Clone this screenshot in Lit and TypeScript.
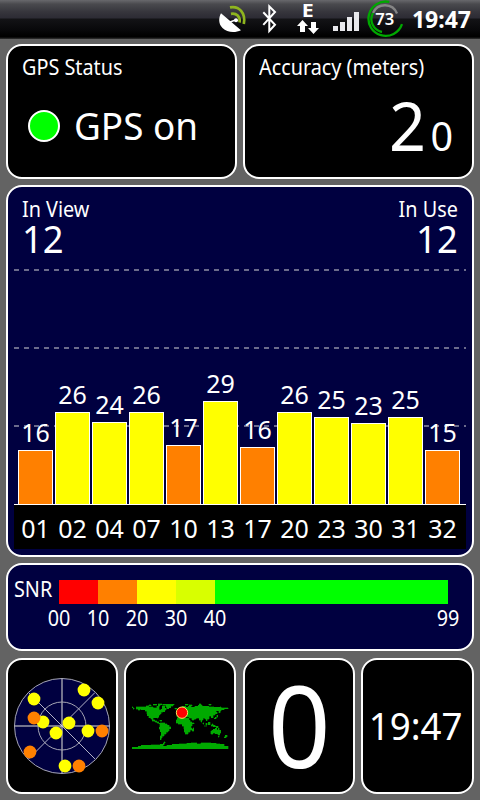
import { LitElement, html, svg, css } from "lit";
import { customElement } from "lit/decorators.js";
import { styleMap } from "lit/directives/style-map.js";

const ORANGE = "#ff8000";
const YELLOW = "#ffff00";

interface Satellite {
  id: string;
  snr: number;
  height: number;
}

const SATELLITES: Satellite[] = [
  { id: "01", snr: 16, height: 54 },
  { id: "02", snr: 26, height: 92 },
  { id: "04", snr: 24, height: 82 },
  { id: "07", snr: 26, height: 92 },
  { id: "10", snr: 17, height: 59 },
  { id: "13", snr: 29, height: 103 },
  { id: "17", snr: 16, height: 57 },
  { id: "20", snr: 26, height: 92 },
  { id: "23", snr: 25, height: 87 },
  { id: "30", snr: 23, height: 81 },
  { id: "31", snr: 25, height: 87 },
  { id: "32", snr: 15, height: 54 },
];

const SKY: Array<[number, number, string]> = [
  [20, 21, YELLOW],
  [70, 12, YELLOW],
  [84, 25, YELLOW],
  [29, 44, YELLOW],
  [20, 40, ORANGE],
  [55, 45, YELLOW],
  [42, 55, YELLOW],
  [74, 53, YELLOW],
  [88, 53, ORANGE],
  [16, 74, ORANGE],
  [51, 88, YELLOW],
  [65, 88, ORANGE],
];

const LAND = [
  // Alaska, Canada, United States, Mexico
  "M408 171H438V168H446V171H460V174H470V170H478V180H484V178H494V186H490V188H484V192H480V196H476V202H474V206H470V204H460V210H464V213H470V216H476V220H482V222H476V220H470V217H464V214H456V209H452V204H446V198H442V192H440V184H436V180H424V178H420V181H414V178H408Z",
  // Arctic islands and Greenland
  "M460 164H470V167H460ZM474 162H486V165H480V169H474ZM486 168H494V176H498V181H492V177H486ZM446 165H454V168H446ZM488 163H522V166H518V170H512V174H506V177H500V172H497V167H488Z",
  // South America
  "M480 219H494V222H501V227H507V231H512V237H508V243H504V248H498V253H492V260H487V266H484V270H481V258H484V246H480V239H477V232H479Z",
  // Europe and Asia
  "M534 179H540V174H547V170H557V173H564V170H573V173H584V169H594V166H606V169H626V171H642V173H660V171H664V174H684V177H672V180H664V184H660V189H656V183H648V187H652V192H645V196H639V204H633V200H628V208H622V213H619V208H614V205H609V211H605V217H602V212H597V205H588V209H582V212H575V206H567V202H559V199H551V196H544V199H536V202H530V195H534V191H528V187H535V184H529Z",
  // Africa
  "M531 204H546V202H550V206H566V210H570V216H575V219H582V222H577V228H573V236H575V242H570V248H564V253H556V248H553V238H551V229H546V224H534V221H529V210H531ZM578 234H581V244H577Z",
  // Indonesia, Australia, New Zealand
  "M608 219H611V223H608ZM617 221H622V226H617ZM624 218H631V225H625ZM633 225H636V222H639V226H646V229H655V234H648V231H639V229H633ZM613 228H622V230H613ZM635 241H640V238H646V236H650V240H654V236H657V242H662V250H659V257H653V252H645V251H638V253H632V244H635ZM655 259H658V262H655ZM676 257H681V261H678V264H673V261H676ZM643 205H646V202H650V197H653V203H648V207H643Z",
  "M396 171H400V174H396ZM399 175H403V178H399ZM524 176H531V179H524ZM568 165H577V168H568ZM598 162H603V165H598ZM556 164H564V167H556ZM626 164H634V167H626ZM479 211H485V214H479Z",
  // Antarctica
  "M396 293H414V290H424V286H440V287H452V285H480V283H490V279H493V276H496V280H492V286H488V289H500V286H516V284H536V282H560V281H572V279H590V282H602V279H632V280H648V282H660V284H672V290H684V297H396Z",
].join("");

@customElement("status-bar")
class StatusBar extends LitElement {
  static styles = css`
    :host {
      display: flex;
      height: 39px;
      box-sizing: border-box;
      justify-content: flex-end;
      padding-right: 9px;
      background: linear-gradient(#68686c 0, #4a4a4e 4px, #36353c 12px, #2c2b34 18px, #131316 19px, #08080a 30px, #000 36px, #000 37px, #333 39px);
      color: #fff;
      font-family: "Noto Sans", sans-serif;
      font-weight: 700;
    }
    svg {
      display: block;
      flex: none;
      overflow: visible;
    }
    .clock {
      width: 61px;
      margin-left: 6px;
      font-size: 23px;
      line-height: 38px;
      text-align: right;
      white-space: nowrap;
    }
    .small {
      font-size: 16.5px;
      font-weight: 600;
    }
    .edge {
      font-size: 17px;
    }
  `;

  render() {
    return html`
      <svg width="150" height="38" viewBox="216 0 150 38">
        <path d="M221 13.3 241 30.3C235 33.2 227 32.7 222.5 28C218.5 24 218.4 18 221 13.3Z" fill="#fff" />
        <path d="M230 22 235.5 20" stroke="#fff" stroke-width="1.6" />
        <circle cx="236" cy="20.2" r="2" fill="#fff" />
        <path d="M231 13.8C236.5 12.8 240.5 16.5 239.6 22.5M230 7.4C239 5.6 246 13 243.8 24" fill="none" stroke="#8fb51f" stroke-width="2.7" />
        <path d="M263.3 12.3 275 24.7 269.3 31V6.3L275 12 263.3 24.8" fill="none" stroke="#fff" stroke-width="2" />
        <text class="edge" x="301.8" y="16.7" textLength="12" lengthAdjust="spacingAndGlyphs" fill="#fff">E</text>
        <path d="M302.5 20 308 26H305V32H300V26H297ZM311 22H316V28H319L313.5 34 308 28H311Z" fill="#fff" />
        <path d="M333 26H338V31H333ZM340 22H345V31H340ZM347 17H352V31H347ZM354 12H359V31H354Z" fill="#e8e8ec" />
      </svg>
      <svg width="38" height="38" viewBox="365 0 38 38">
        <g fill="none" stroke-width="2.3">
          <path d="M388.3 1.9A17.2 17.2 0 1 0 401 24.2" stroke="#00a800" />
          <path d="M372 13A13 13 0 0 1 396 13.5" stroke="#858585" />
          <path d="M372 13A13 13 0 0 0 381 32" stroke="#00a800" />
        </g>
        <text class="small" x="383.8" y="25" text-anchor="middle" textLength="19" lengthAdjust="spacingAndGlyphs" fill="#fff">73</text>
      </svg>
      <div class="clock">19:47</div>
    `;
  }
}

@customElement("app-root")
class AppRoot extends LitElement {
  static styles = css`
    :host {
      display: block;
      width: 480px;
      height: 800px;
      overflow: hidden;
      background: #636363;
      color: #fff;
      font-family: "Noto Sans", sans-serif;
      white-space: nowrap;
    }
    .dash {
      display: grid;
      grid-template-rows: 135px 372px 88px 136px;
      row-gap: 6px;
      padding: 5px 6px 0;
    }
    .row {
      display: grid;
      column-gap: 6px;
    }
    .top {
      grid-template-columns: 231px 231px;
      grid-template-rows: 135px;
    }
    .bottom {
      grid-template-columns: 112px 113px 112px 113px;
      grid-template-rows: 136px;
      margin-top: 1px;
    }
    .map {
      margin-right: 1px;
    }
    .card {
      box-sizing: border-box;
      border: 2px solid #fff;
      border-radius: 16px;
      background: #000;
      min-width: 0;
    }
    .navy {
      background: #000040;
    }
    .label {
      display: block;
      font-size: 22px;
      line-height: 22px;
      transform: scaleX(0.9);
      transform-origin: left;
    }
    .end {
      transform-origin: right;
    }
    .pad {
      padding: 9px 14px 0;
    }
    .gps {
      display: flex;
      align-items: center;
      gap: 14px;
      padding: 21px 0 0 6px;
      font-size: 38px;
      line-height: 58px;
    }
    .state {
      margin-top: -2px;
      transform: scaleX(0.97);
      transform-origin: left;
    }
    .dot {
      box-sizing: border-box;
      width: 32px;
      height: 32px;
      border: 2px solid #fff;
      border-radius: 50%;
      background: #0f0;
    }
    .accuracy {
      display: flex;
      justify-content: flex-end;
      align-items: baseline;
      padding: 8px 5px 0 0;
      line-height: 80px;
    }
    .whole {
      font-size: 68px;
      transform: scaleX(0.95);
      transform-origin: right;
    }
    .frac {
      font-size: 39.5px;
      margin-left: 4px;
    }
    .chart {
      padding: 0 6px;
    }
    .heads {
      display: flex;
      justify-content: space-between;
      height: 82px;
      padding: 10px 8px 0;
      box-sizing: border-box;
    }
    .count {
      display: block;
      font-size: 38px;
      line-height: 38px;
      transform: scaleX(0.96);
      transform-origin: left;
    }
    .right {
      text-align: right;
    }
    .right .count {
      transform-origin: right;
    }
    .plot {
      display: flex;
      height: 235px;
      align-items: flex-end;
      gap: 2px;
      padding-left: 4px;
      background: repeating-linear-gradient(90deg, #6b6b8c 0 5px, transparent 5px 10px) 0 0 / 100% 2px no-repeat,
        repeating-linear-gradient(90deg, #6b6b8c 0 5px, transparent 5px 10px) 0 78px / 100% 2px no-repeat,
        repeating-linear-gradient(90deg, #6b6b8c 0 5px, transparent 5px 10px) 0 156px / 100% 2px no-repeat;
    }
    .sat {
      width: 35px;
      text-align: center;
      font-size: 25px;
    }
    .value {
      display: block;
      line-height: 36px;
    }
    .bar {
      box-sizing: border-box;
      border: 1px solid #fff;
      border-bottom: 0;
    }
    .axis {
      display: flex;
      gap: 2px;
      height: 45px;
      box-sizing: border-box;
      padding-left: 4px;
      border-top: 1px solid #fff;
      background: #000;
      line-height: 47px;
    }
    .snr {
      display: grid;
      grid-template-columns: 45px 389px;
      grid-template-rows: 24px 28px;
      padding: 15px 0 0 6px;
    }
    .snr .label {
      line-height: 17px;
    }
    .scale {
      display: grid;
      grid-template-columns: 39px 39px 39px 39px 1fr;
      grid-column: 2;
      grid-row: 1;
    }
    .ticks {
      display: grid;
      grid-template-columns: 39px 39px 39px 39px 233px 0;
      grid-column: 2;
    }
    .ticks .label {
      justify-self: start;
      width: 40px;
      margin-left: -20px;
      text-align: center;
      line-height: 27px;
      transform-origin: center;
    }
    .red { background: #f00; }
    .orange { background: #ff8000; }
    .yellow { background: #ff0; }
    .lime { background: #d8ff00; }
    .green { background: #0f0; }
    .center {
      display: flex;
      align-items: center;
      justify-content: center;
    }
    .zero {
      font-size: 113px;
      line-height: 132px;
      margin-top: -4px;
      transform: scaleX(0.97);
    }
    .time {
      font-size: 38px;
      line-height: 40px;
      margin: -3px 3px 0 0;
      transform: scaleX(0.965);
    }
    svg {
      display: block;
      flex: none;
      overflow: visible;
    }
  `;

  private renderSky() {
    return html`<svg width="96" height="96" viewBox="0 0 96 96">
      <circle cx="48" cy="48" r="47.5" fill="#000040" />
      <path d="M0 48H96M48 0V96" stroke="#73738e" stroke-width="2" />
      <path d="M14.5 14.5 81 81M81 14.5 14.5 81" stroke="#e0e0ea" stroke-width="0.8" />
      <circle cx="48" cy="48" r="47.5" fill="none" stroke="#a6a6b4" />
      <circle cx="48" cy="48" r="24" fill="none" stroke="#a6a6b4" />
      ${SKY.map(([x, y, fill]) => svg`<circle cx=${x} cy=${y} r="6.4" fill=${fill} />`)}
    </svg>`;
  }

  private renderMap() {
    return html`<svg width="96" height="46" viewBox="396 160 288 138">
      <path d=${LAND} fill="#00aa00" stroke="#00aa00" stroke-width="1" shape-rendering="crispEdges" />
      <circle cx="546" cy="189" r="17" fill="#f00" stroke="#ffe060" stroke-width="3" />
    </svg>`;
  }

  render() {
    return html`
      <status-bar></status-bar>
      <div class="dash">
        <div class="row top">
          <div class="card pad">
            <span class="label">GPS Status</span>
            <div class="gps"><span class="dot"></span><span class="state">GPS on</span></div>
          </div>
          <div class="card pad">
            <span class="label">Accuracy (meters)</span>
            <div class="accuracy"><span class="whole">2</span><span class="frac">0</span></div>
          </div>
        </div>
        <div class="card navy chart">
          <div class="heads">
            <div><span class="label">In View</span><span class="count">12</span></div>
            <div class="right"><span class="label end">In Use</span><span class="count">12</span></div>
          </div>
          <div class="plot">
            ${SATELLITES.map(
              (s) => html`<div class="sat">
                <span class="value">${s.snr}</span>
                <div class="bar ${s.snr < 20 ? "orange" : "yellow"}" style=${styleMap({ height: `${s.height}px` })}></div>
              </div>`
            )}
          </div>
          <div class="axis">${SATELLITES.map((s) => html`<span class="sat">${s.id}</span>`)}</div>
        </div>
        <div class="card navy snr">
          <span class="label">SNR</span>
          <div class="scale">
            ${["red", "orange", "yellow", "lime", "green"].map((c) => html`<i class=${c}></i>`)}
          </div>
          <div class="ticks">
            ${["00", "10", "20", "30", "40", "99"].map((t) => html`<span class="label">${t}</span>`)}
          </div>
        </div>
        <div class="row bottom">
          <div class="card center">${this.renderSky()}</div>
          <div class="card center map">${this.renderMap()}</div>
          <div class="card center"><span class="zero">0</span></div>
          <div class="card center"><span class="time">19:47</span></div>
        </div>
      </div>
    `;
  }
}
